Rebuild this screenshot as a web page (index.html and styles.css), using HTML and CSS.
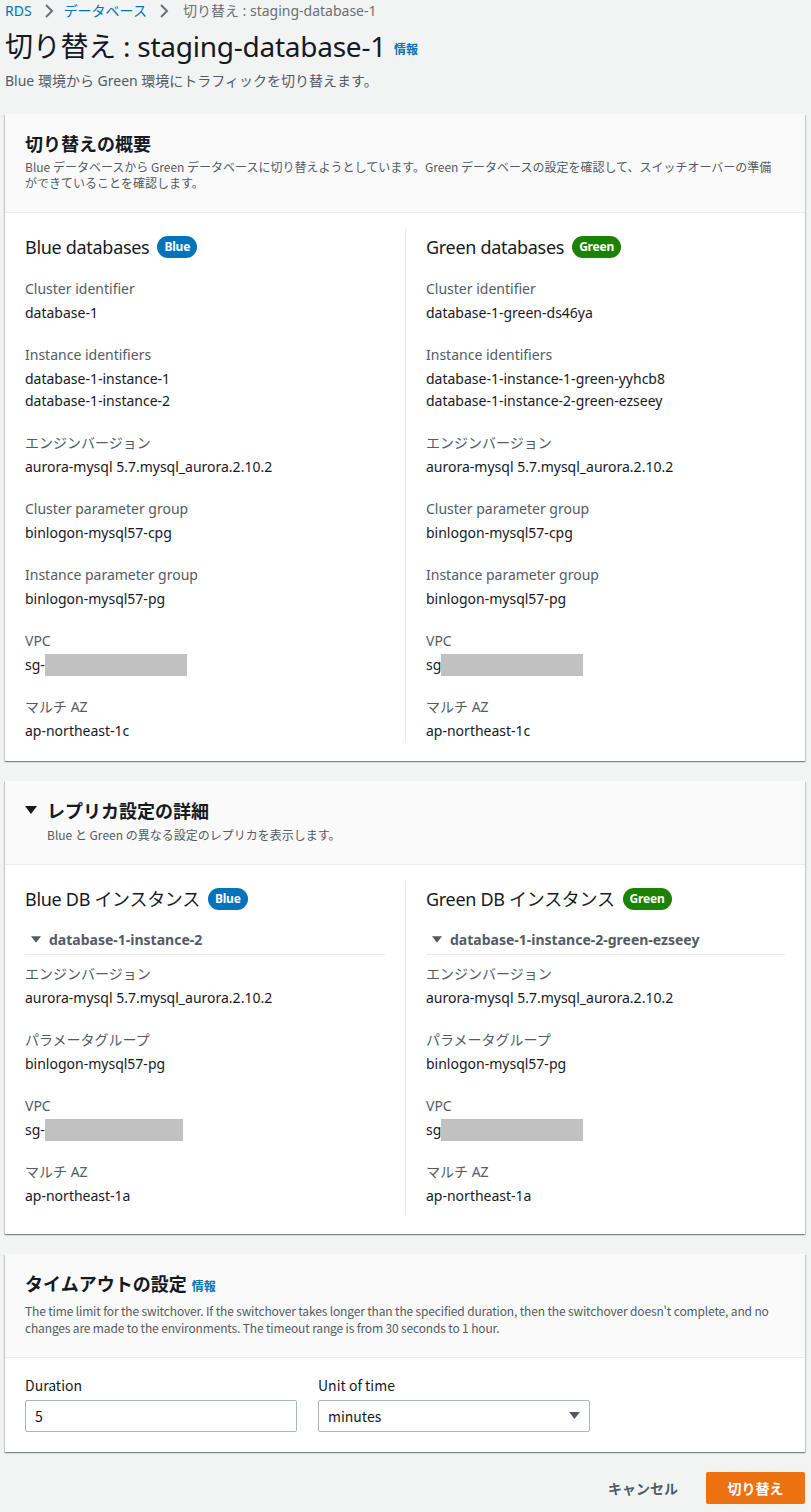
FILE: index.html
```html
<!DOCTYPE html>
<html lang="ja">
<head>
    <meta charset="UTF-8">
    <meta name="viewport" content="width=device-width, initial-scale=1.0">
    <title>切り替え : staging-database-1</title>
    <link rel="stylesheet" href="styles.css">
</head>
<body>
<div class="page">
    <nav class="crumbs">
        <a href="#">RDS</a>
        <svg class="chev" viewBox="0 0 10 16"><path d="M2 2l6 6-6 6"/></svg>
        <a href="#">データベース</a>
        <svg class="chev" viewBox="0 0 10 16"><path d="M2 2l6 6-6 6"/></svg>
        <span class="here">切り替え : staging-database-1</span>
    </nav>

    <div class="page-head">
        <h1>切り替え : staging-database-1 <a class="info" href="#">情報</a></h1>
        <p class="sub">Blue 環境から Green 環境にトラフィックを切り替えます。</p>
    </div>

    <section class="card">
        <header class="card-head">
            <h2>切り替えの概要</h2>
            <p class="narrow">Blue データベースから Green データベースに切り替えようとしています。Green データベースの設定を確認して、スイッチオーバーの準備ができていることを確認します。</p>
        </header>
        <div class="card-body cols">
            <div class="col">
                <h3>Blue databases <span class="badge blue">Blue</span></h3>
                <div class="field"><div class="label">Cluster identifier</div><div class="value">database-1</div></div>
                <div class="field"><div class="label">Instance identifiers</div><div class="value">database-1-instance-1<br>database-1-instance-2</div></div>
                <div class="field"><div class="label">エンジンバージョン</div><div class="value">aurora-mysql 5.7.mysql_aurora.2.10.2</div></div>
                <div class="field"><div class="label">Cluster parameter group</div><div class="value">binlogon-mysql57-cpg</div></div>
                <div class="field"><div class="label">Instance parameter group</div><div class="value">binlogon-mysql57-pg</div></div>
                <div class="field"><div class="label">VPC</div><div class="value">sg-<span class="redact"></span></div></div>
                <div class="field"><div class="label">マルチ AZ</div><div class="value">ap-northeast-1c</div></div>
            </div>
            <div class="col">
                <h3>Green databases <span class="badge green">Green</span></h3>
                <div class="field"><div class="label">Cluster identifier</div><div class="value">database-1-green-ds46ya</div></div>
                <div class="field"><div class="label">Instance identifiers</div><div class="value">database-1-instance-1-green-yyhcb8<br>database-1-instance-2-green-ezseey</div></div>
                <div class="field"><div class="label">エンジンバージョン</div><div class="value">aurora-mysql 5.7.mysql_aurora.2.10.2</div></div>
                <div class="field"><div class="label">Cluster parameter group</div><div class="value">binlogon-mysql57-cpg</div></div>
                <div class="field"><div class="label">Instance parameter group</div><div class="value">binlogon-mysql57-pg</div></div>
                <div class="field"><div class="label">VPC</div><div class="value">sg<span class="redact"></span></div></div>
                <div class="field"><div class="label">マルチ AZ</div><div class="value">ap-northeast-1c</div></div>
            </div>
        </div>
    </section>

    <section class="card">
        <header class="card-head">
            <h2 class="toggle"><svg class="caret" viewBox="0 0 12 10"><path d="M0 1h12L6 9z"/></svg>レプリカ設定の詳細</h2>
            <p class="indent">Blue と Green の異なる設定のレプリカを表示します。</p>
        </header>
        <div class="card-body cols">
            <div class="col">
                <h3>Blue DB インスタンス <span class="badge blue">Blue</span></h3>
                <div class="expander"><svg class="caret small" viewBox="0 0 12 10"><path d="M0 1h12L6 9z"/></svg>database-1-instance-2</div>
                <div class="field"><div class="label">エンジンバージョン</div><div class="value">aurora-mysql 5.7.mysql_aurora.2.10.2</div></div>
                <div class="field"><div class="label">パラメータグループ</div><div class="value">binlogon-mysql57-pg</div></div>
                <div class="field"><div class="label">VPC</div><div class="value">sg-<span class="redact short"></span></div></div>
                <div class="field"><div class="label">マルチ AZ</div><div class="value">ap-northeast-1a</div></div>
            </div>
            <div class="col">
                <h3>Green DB インスタンス <span class="badge green">Green</span></h3>
                <div class="expander"><svg class="caret small" viewBox="0 0 12 10"><path d="M0 1h12L6 9z"/></svg>database-1-instance-2-green-ezseey</div>
                <div class="field"><div class="label">エンジンバージョン</div><div class="value">aurora-mysql 5.7.mysql_aurora.2.10.2</div></div>
                <div class="field"><div class="label">パラメータグループ</div><div class="value">binlogon-mysql57-pg</div></div>
                <div class="field"><div class="label">VPC</div><div class="value">sg<span class="redact"></span></div></div>
                <div class="field"><div class="label">マルチ AZ</div><div class="value">ap-northeast-1a</div></div>
            </div>
        </div>
    </section>

    <section class="card timeout">
        <header class="card-head">
            <h2>タイムアウトの設定 <a class="info" href="#">情報</a></h2>
            <p class="tight">The time limit for the switchover. If the switchover takes longer than the specified duration, then the switchover doesn't complete, and no changes are made to the environments. The timeout range is from 30 seconds to 1 hour.</p>
        </header>
        <div class="card-body form">
            <label class="form-field">
                <span class="form-label">Duration</span>
                <input type="text" value="5">
            </label>
            <label class="form-field">
                <span class="form-label">Unit of time</span>
                <span class="select">minutes<svg class="select-caret" viewBox="0 0 12 10"><path d="M0 1h12L6 9z"/></svg></span>
            </label>
        </div>
    </section>

    <div class="actions">
        <button class="btn-link">キャンセル</button>
        <button class="btn-primary">切り替え</button>
    </div>
</div>
</body>
</html>
```

FILE: styles.css
```css
body {
    margin: 0;
    background: #f2f3f3;
    color: #16191f;
    font-family: "Noto Sans", "Noto Sans CJK JP", sans-serif;
    font-size: 14px;
    line-height: 22px;
}
a {
    color: #0073bb;
    text-decoration: none;
}
.page {
    padding: 0 6px 7px 5px;
}

/* breadcrumbs */
.crumbs {
    display: flex;
    align-items: center;
    height: 22px;
}
.chev {
    width: 10px;
    height: 16px;
    margin: 0 10px 0 12px;
    fill: none;
    stroke: #687078;
    stroke-width: 2;
}
.here {
    color: #687078;
    margin-left: 4px;
}

/* page header */
.page-head h1 {
    margin: 11px 0 0;
    font-size: 28px;
    line-height: 26px;
    font-weight: 400;
    letter-spacing: -0.25px;
}
.info {
    font-size: 12px;
    font-weight: 700;
    vertical-align: middle;
    margin-left: 1px;
    letter-spacing: 0;
}
.sub {
    margin: 7px 0 0;
    color: #545b64;
    line-height: 22px;
}

/* cards */
.card {
    background: #fff;
    margin-top: 20px;
    box-shadow: 0 1px 1px 0 rgba(0, 28, 36, 0.3), 1px 1px 1px 0 rgba(0, 28, 36, 0.15), -1px 1px 1px 0 rgba(0, 28, 36, 0.15);
}
.page-head + .card {
    margin-top: 22px;
}
.card-head {
    background: #fafafa;
    border-bottom: 1px solid #eaeded;
    padding: 18px 20px 21px;
    font-family: "Noto Sans CJK JP", sans-serif;
}
.card-head h2 {
    margin: 0;
    font-size: 18px;
    line-height: 22px;
    font-weight: 700;
}
.card-head p {
    margin: 5px 0 0;
    font-size: 12px;
    line-height: 16px;
    color: #545b64;
}
.card-head .narrow {
    max-width: 752px;
}
.card-head .tight {
    letter-spacing: -0.15px;
    line-height: 17px;
}
.card-head .indent {
    margin-top: 6px;
    padding-left: 22px;
}
.toggle {
    display: flex;
    align-items: center;
}
.caret {
    width: 12px;
    height: 10px;
    fill: #16191f;
    margin: 0 10px 0 0;
}
.caret.small {
    width: 10px;
    height: 9px;
    fill: #545b64;
    margin: 0 8px 0 6px;
}

.card-body {
    padding: 16px 20px 19px;
}
.cols {
    display: grid;
    grid-template-columns: 1fr 1fr;
}
.col {
    padding: 4px 20px 0 0;
}
.col + .col {
    border-left: 1px solid #eaeded;
    padding: 4px 0 0 20px;
}
.col h3 {
    display: flex;
    align-items: center;
    margin: 0 0 17px;
    font-size: 18px;
    line-height: 28px;
    font-weight: 400;
    letter-spacing: -0.3px;
}
.badge {
    display: inline-block;
    margin-left: 8px;
    padding: 0 7px;
    border-radius: 12px;
    color: #fff;
    font-size: 12px;
    font-weight: 700;
    line-height: 22px;
    letter-spacing: -0.2px;
}
.badge.blue {
    background: #0073bb;
}
.badge.green {
    background: #1d8102;
}
.field + .field {
    margin-top: 20px;
}
.label {
    color: #545b64;
}
.value {
    margin-top: 2px;
}
.redact {
    display: inline-block;
    width: 142px;
    height: 22px;
    background: #c1c1c1;
    vertical-align: top;
}
.redact.short {
    width: 138px;
}
.expander {
    display: flex;
    align-items: center;
    margin: -5px 0 8px;
    padding: 4px 0 3px;
    border-bottom: 1px solid #eaeded;
    color: #545b64;
    font-weight: 700;
}
.cols .expander ~ .field:last-child {
    padding-bottom: 8px;
}

/* timeout form */
.timeout {
    margin-top: 20px;
}
.timeout .card-body,
.actions {
    font-family: "Noto Sans CJK JP", sans-serif;
}
.form {
    display: flex;
    gap: 21px;
    padding-top: 16px;
    padding-bottom: 20px;
}
.form-field {
    display: flex;
    flex-direction: column;
    width: 272px;
}
.form-label {
    line-height: 22px;
    margin-bottom: 4px;
}
.form input,
.select {
    box-sizing: border-box;
    height: 32px;
    padding: 4px 9px;
    border: 1px solid #aab7b8;
    border-radius: 2px;
    font: inherit;
    color: #16191f;
    background: #fff;
}
.select {
    display: flex;
    align-items: center;
    justify-content: space-between;
}
.select-caret {
    width: 11px;
    height: 9px;
    fill: #545b64;
}

.actions {
    display: flex;
    justify-content: flex-end;
    align-items: center;
    margin-top: 20px;
}
.actions button {
    font: inherit;
    font-weight: 700;
    height: 32px;
    border-radius: 2px;
    cursor: pointer;
}
.btn-link {
    border: 0;
    background: none;
    color: #545b64;
    padding: 0 20px;
    margin-right: 8px;
}
.btn-primary {
    border: 0;
    background: #ec7211;
    color: #fff;
    width: 99px;
}
```
